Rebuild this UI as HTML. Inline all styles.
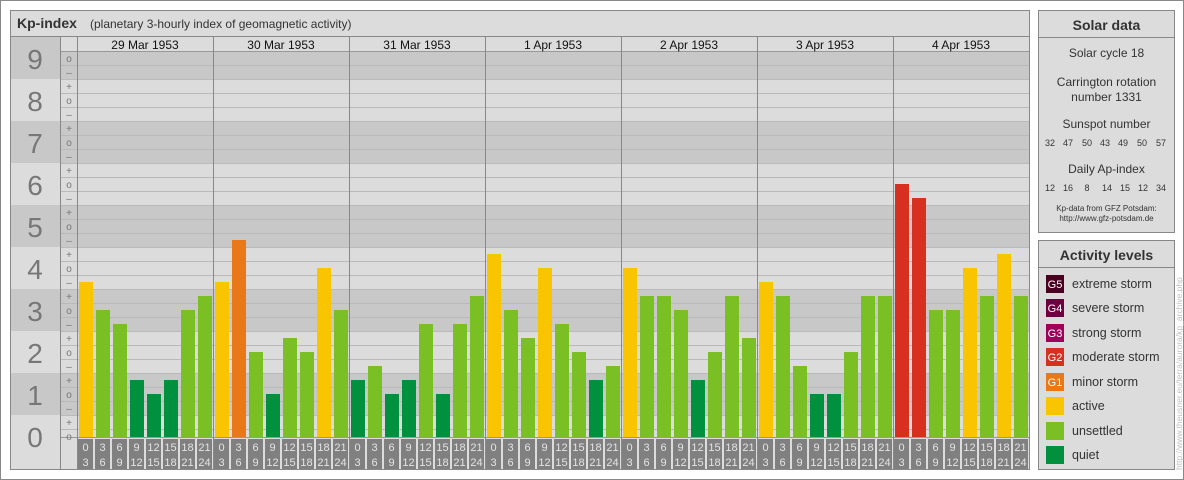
<!DOCTYPE html>
<html><head><meta charset="utf-8"><style>
html,body{margin:0;padding:0;background:#fff;}
svg{display:block;font-family:"Liberation Sans",Arial,sans-serif;}
</style></head><body>
<svg width="1184" height="480" viewBox="0 0 1184 480" xmlns="http://www.w3.org/2000/svg">
<rect x="0.5" y="0.5" width="1183" height="479" fill="#fff" stroke="#888"/>
<!-- main panel -->
<rect x="10.5" y="10.5" width="1019" height="459" fill="#dcdcdc" stroke="#888"/>
<text x="17" y="28" font-size="14" font-weight="bold" fill="#333">Kp-index</text>
<text x="90" y="28" font-size="12" fill="#333">(planetary 3-hourly index of geomagnetic activity)</text>
<line x1="10" y1="36.5" x2="1030" y2="36.5" stroke="#888"/>
<!-- number column bands -->
<rect x="11" y="37" width="49" height="42" fill="#c8c8c8"/>
<rect x="11" y="121" width="49" height="42" fill="#c8c8c8"/>
<rect x="11" y="205" width="49" height="42" fill="#c8c8c8"/>
<rect x="11" y="289" width="49" height="42" fill="#c8c8c8"/>
<rect x="11" y="373" width="49" height="42" fill="#c8c8c8"/>
<g font-size="28" fill="#777" text-anchor="middle">
<text x="35" y="69">9</text><text x="35" y="111">8</text><text x="35" y="153">7</text><text x="35" y="195">6</text><text x="35" y="237">5</text><text x="35" y="279">4</text><text x="35" y="321">3</text><text x="35" y="363">2</text><text x="35" y="405">1</text><text x="35" y="447">0</text>
</g>
<!-- chart bands (sign col + chart) -->
<rect x="60" y="51" width="969" height="28" fill="#c8c8c8"/>
<rect x="60" y="121" width="969" height="42" fill="#c8c8c8"/>
<rect x="60" y="205" width="969" height="42" fill="#c8c8c8"/>
<rect x="60" y="289" width="969" height="42" fill="#c8c8c8"/>
<rect x="60" y="373" width="969" height="42" fill="#c8c8c8"/>
<g stroke="#bababa" stroke-width="1">
<line x1="60" x2="1029" y1="65.5" y2="65.5"/><line x1="60" x2="1029" y1="79.5" y2="79.5"/><line x1="60" x2="1029" y1="93.5" y2="93.5"/><line x1="60" x2="1029" y1="107.5" y2="107.5"/><line x1="60" x2="1029" y1="121.5" y2="121.5"/><line x1="60" x2="1029" y1="135.5" y2="135.5"/><line x1="60" x2="1029" y1="149.5" y2="149.5"/><line x1="60" x2="1029" y1="163.5" y2="163.5"/><line x1="60" x2="1029" y1="177.5" y2="177.5"/><line x1="60" x2="1029" y1="191.5" y2="191.5"/><line x1="60" x2="1029" y1="205.5" y2="205.5"/><line x1="60" x2="1029" y1="219.5" y2="219.5"/><line x1="60" x2="1029" y1="233.5" y2="233.5"/><line x1="60" x2="1029" y1="247.5" y2="247.5"/><line x1="60" x2="1029" y1="261.5" y2="261.5"/><line x1="60" x2="1029" y1="275.5" y2="275.5"/><line x1="60" x2="1029" y1="289.5" y2="289.5"/><line x1="60" x2="1029" y1="303.5" y2="303.5"/><line x1="60" x2="1029" y1="317.5" y2="317.5"/><line x1="60" x2="1029" y1="331.5" y2="331.5"/><line x1="60" x2="1029" y1="345.5" y2="345.5"/><line x1="60" x2="1029" y1="359.5" y2="359.5"/><line x1="60" x2="1029" y1="373.5" y2="373.5"/><line x1="60" x2="1029" y1="387.5" y2="387.5"/><line x1="60" x2="1029" y1="401.5" y2="401.5"/><line x1="60" x2="1029" y1="415.5" y2="415.5"/><line x1="60" x2="1029" y1="429.5" y2="429.5"/>
</g>
<!-- header row -->
<rect x="60" y="37" width="969" height="14" fill="#dcdcdc"/>
<line x1="60" x2="1029" y1="51.5" y2="51.5" stroke="#999"/>
<line x1="60" x2="1029" y1="437.5" y2="437.5" stroke="#999"/>
<rect x="60" y="438" width="17" height="32" fill="#dcdcdc"/>
<rect x="77" y="438" width="952" height="31" fill="#dcdcdc"/>
<!-- signs -->
<g font-size="10" fill="#777" text-anchor="middle">
<text x="69" y="62">o</text><text x="69" y="76">–</text><text x="69" y="90">+</text><text x="69" y="104">o</text><text x="69" y="118">–</text><text x="69" y="132">+</text><text x="69" y="146">o</text><text x="69" y="160">–</text><text x="69" y="174">+</text><text x="69" y="188">o</text><text x="69" y="202">–</text><text x="69" y="216">+</text><text x="69" y="230">o</text><text x="69" y="244">–</text><text x="69" y="258">+</text><text x="69" y="272">o</text><text x="69" y="286">–</text><text x="69" y="300">+</text><text x="69" y="314">o</text><text x="69" y="328">–</text><text x="69" y="342">+</text><text x="69" y="356">o</text><text x="69" y="370">–</text><text x="69" y="384">+</text><text x="69" y="398">o</text><text x="69" y="412">–</text><text x="69" y="426">+</text><text x="69" y="440">o</text>
</g>
<!-- vertical lines -->
<g stroke="#888">
<line x1="60.5" x2="60.5" y1="37" y2="470"/>
<line x1="77.5" x2="77.5" y1="37" y2="470"/>
<line x1="213.5" x2="213.5" y1="37" y2="470"/><line x1="349.5" x2="349.5" y1="37" y2="470"/><line x1="485.5" x2="485.5" y1="37" y2="470"/><line x1="621.5" x2="621.5" y1="37" y2="470"/><line x1="757.5" x2="757.5" y1="37" y2="470"/><line x1="893.5" x2="893.5" y1="37" y2="470"/>
</g>
<g font-size="12" fill="#111" text-anchor="middle">
<text x="145" y="49">29 Mar 1953</text><text x="281" y="49">30 Mar 1953</text><text x="417" y="49">31 Mar 1953</text><text x="553" y="49">1 Apr 1953</text><text x="689" y="49">2 Apr 1953</text><text x="825" y="49">3 Apr 1953</text><text x="961" y="49">4 Apr 1953</text>
</g>
<!-- bars -->
<g transform="translate(77,0)">
<rect x="2" y="282" width="14" height="155" fill="#f8c500"/><rect x="19" y="310" width="14" height="127" fill="#7ac025"/><rect x="36" y="324" width="14" height="113" fill="#7ac025"/><rect x="53" y="380" width="14" height="57" fill="#00903e"/><rect x="70" y="394" width="14" height="43" fill="#00903e"/><rect x="87" y="380" width="14" height="57" fill="#00903e"/><rect x="104" y="310" width="14" height="127" fill="#7ac025"/><rect x="121" y="296" width="14" height="141" fill="#7ac025"/>
</g>
<g transform="translate(213,0)">
<rect x="2" y="282" width="14" height="155" fill="#f8c500"/><rect x="19" y="240" width="14" height="197" fill="#e87818"/><rect x="36" y="352" width="14" height="85" fill="#7ac025"/><rect x="53" y="394" width="14" height="43" fill="#00903e"/><rect x="70" y="338" width="14" height="99" fill="#7ac025"/><rect x="87" y="352" width="14" height="85" fill="#7ac025"/><rect x="104" y="268" width="14" height="169" fill="#f8c500"/><rect x="121" y="310" width="14" height="127" fill="#7ac025"/>
</g>
<g transform="translate(349,0)">
<rect x="2" y="380" width="14" height="57" fill="#00903e"/><rect x="19" y="366" width="14" height="71" fill="#7ac025"/><rect x="36" y="394" width="14" height="43" fill="#00903e"/><rect x="53" y="380" width="14" height="57" fill="#00903e"/><rect x="70" y="324" width="14" height="113" fill="#7ac025"/><rect x="87" y="394" width="14" height="43" fill="#00903e"/><rect x="104" y="324" width="14" height="113" fill="#7ac025"/><rect x="121" y="296" width="14" height="141" fill="#7ac025"/>
</g>
<g transform="translate(485,0)">
<rect x="2" y="254" width="14" height="183" fill="#f8c500"/><rect x="19" y="310" width="14" height="127" fill="#7ac025"/><rect x="36" y="338" width="14" height="99" fill="#7ac025"/><rect x="53" y="268" width="14" height="169" fill="#f8c500"/><rect x="70" y="324" width="14" height="113" fill="#7ac025"/><rect x="87" y="352" width="14" height="85" fill="#7ac025"/><rect x="104" y="380" width="14" height="57" fill="#00903e"/><rect x="121" y="366" width="14" height="71" fill="#7ac025"/>
</g>
<g transform="translate(621,0)">
<rect x="2" y="268" width="14" height="169" fill="#f8c500"/><rect x="19" y="296" width="14" height="141" fill="#7ac025"/><rect x="36" y="296" width="14" height="141" fill="#7ac025"/><rect x="53" y="310" width="14" height="127" fill="#7ac025"/><rect x="70" y="380" width="14" height="57" fill="#00903e"/><rect x="87" y="352" width="14" height="85" fill="#7ac025"/><rect x="104" y="296" width="14" height="141" fill="#7ac025"/><rect x="121" y="338" width="14" height="99" fill="#7ac025"/>
</g>
<g transform="translate(757,0)">
<rect x="2" y="282" width="14" height="155" fill="#f8c500"/><rect x="19" y="296" width="14" height="141" fill="#7ac025"/><rect x="36" y="366" width="14" height="71" fill="#7ac025"/><rect x="53" y="394" width="14" height="43" fill="#00903e"/><rect x="70" y="394" width="14" height="43" fill="#00903e"/><rect x="87" y="352" width="14" height="85" fill="#7ac025"/><rect x="104" y="296" width="14" height="141" fill="#7ac025"/><rect x="121" y="296" width="14" height="141" fill="#7ac025"/>
</g>
<g transform="translate(893,0)">
<rect x="2" y="184" width="14" height="253" fill="#d83020"/><rect x="19" y="198" width="14" height="239" fill="#d83020"/><rect x="36" y="310" width="14" height="127" fill="#7ac025"/><rect x="53" y="310" width="14" height="127" fill="#7ac025"/><rect x="70" y="268" width="14" height="169" fill="#f8c500"/><rect x="87" y="296" width="14" height="141" fill="#7ac025"/><rect x="104" y="254" width="14" height="183" fill="#f8c500"/><rect x="121" y="296" width="14" height="141" fill="#7ac025"/>
</g>
<!-- time labels -->
<g fill="#808080">
<rect x="78" y="439" width="15" height="31"/><rect x="95" y="439" width="15" height="31"/><rect x="112" y="439" width="15" height="31"/><rect x="129" y="439" width="15" height="31"/><rect x="146" y="439" width="15" height="31"/><rect x="163" y="439" width="15" height="31"/><rect x="180" y="439" width="15" height="31"/><rect x="197" y="439" width="15" height="31"/>
<rect x="214" y="439" width="15" height="31"/><rect x="231" y="439" width="15" height="31"/><rect x="248" y="439" width="15" height="31"/><rect x="265" y="439" width="15" height="31"/><rect x="282" y="439" width="15" height="31"/><rect x="299" y="439" width="15" height="31"/><rect x="316" y="439" width="15" height="31"/><rect x="333" y="439" width="15" height="31"/>
<rect x="350" y="439" width="15" height="31"/><rect x="367" y="439" width="15" height="31"/><rect x="384" y="439" width="15" height="31"/><rect x="401" y="439" width="15" height="31"/><rect x="418" y="439" width="15" height="31"/><rect x="435" y="439" width="15" height="31"/><rect x="452" y="439" width="15" height="31"/><rect x="469" y="439" width="15" height="31"/>
<rect x="486" y="439" width="15" height="31"/><rect x="503" y="439" width="15" height="31"/><rect x="520" y="439" width="15" height="31"/><rect x="537" y="439" width="15" height="31"/><rect x="554" y="439" width="15" height="31"/><rect x="571" y="439" width="15" height="31"/><rect x="588" y="439" width="15" height="31"/><rect x="605" y="439" width="15" height="31"/>
<rect x="622" y="439" width="15" height="31"/><rect x="639" y="439" width="15" height="31"/><rect x="656" y="439" width="15" height="31"/><rect x="673" y="439" width="15" height="31"/><rect x="690" y="439" width="15" height="31"/><rect x="707" y="439" width="15" height="31"/><rect x="724" y="439" width="15" height="31"/><rect x="741" y="439" width="15" height="31"/>
<rect x="758" y="439" width="15" height="31"/><rect x="775" y="439" width="15" height="31"/><rect x="792" y="439" width="15" height="31"/><rect x="809" y="439" width="15" height="31"/><rect x="826" y="439" width="15" height="31"/><rect x="843" y="439" width="15" height="31"/><rect x="860" y="439" width="15" height="31"/><rect x="877" y="439" width="15" height="31"/>
<rect x="894" y="439" width="15" height="31"/><rect x="911" y="439" width="15" height="31"/><rect x="928" y="439" width="15" height="31"/><rect x="945" y="439" width="15" height="31"/><rect x="962" y="439" width="15" height="31"/><rect x="979" y="439" width="15" height="31"/><rect x="996" y="439" width="15" height="31"/><rect x="1013" y="439" width="15" height="31"/>
</g>
<g font-size="11" fill="#e4e4e4" text-anchor="middle">
<g transform="translate(77,0)"><text x="8.5" y="451">0</text><text x="25.5" y="451">3</text><text x="42.5" y="451">6</text><text x="59.5" y="451">9</text><text x="76.5" y="451">12</text><text x="93.5" y="451">15</text><text x="110.5" y="451">18</text><text x="127.5" y="451">21</text><text x="8.5" y="466">3</text><text x="25.5" y="466">6</text><text x="42.5" y="466">9</text><text x="59.5" y="466">12</text><text x="76.5" y="466">15</text><text x="93.5" y="466">18</text><text x="110.5" y="466">21</text><text x="127.5" y="466">24</text></g>
<g transform="translate(213,0)"><text x="8.5" y="451">0</text><text x="25.5" y="451">3</text><text x="42.5" y="451">6</text><text x="59.5" y="451">9</text><text x="76.5" y="451">12</text><text x="93.5" y="451">15</text><text x="110.5" y="451">18</text><text x="127.5" y="451">21</text><text x="8.5" y="466">3</text><text x="25.5" y="466">6</text><text x="42.5" y="466">9</text><text x="59.5" y="466">12</text><text x="76.5" y="466">15</text><text x="93.5" y="466">18</text><text x="110.5" y="466">21</text><text x="127.5" y="466">24</text></g>
<g transform="translate(349,0)"><text x="8.5" y="451">0</text><text x="25.5" y="451">3</text><text x="42.5" y="451">6</text><text x="59.5" y="451">9</text><text x="76.5" y="451">12</text><text x="93.5" y="451">15</text><text x="110.5" y="451">18</text><text x="127.5" y="451">21</text><text x="8.5" y="466">3</text><text x="25.5" y="466">6</text><text x="42.5" y="466">9</text><text x="59.5" y="466">12</text><text x="76.5" y="466">15</text><text x="93.5" y="466">18</text><text x="110.5" y="466">21</text><text x="127.5" y="466">24</text></g>
<g transform="translate(485,0)"><text x="8.5" y="451">0</text><text x="25.5" y="451">3</text><text x="42.5" y="451">6</text><text x="59.5" y="451">9</text><text x="76.5" y="451">12</text><text x="93.5" y="451">15</text><text x="110.5" y="451">18</text><text x="127.5" y="451">21</text><text x="8.5" y="466">3</text><text x="25.5" y="466">6</text><text x="42.5" y="466">9</text><text x="59.5" y="466">12</text><text x="76.5" y="466">15</text><text x="93.5" y="466">18</text><text x="110.5" y="466">21</text><text x="127.5" y="466">24</text></g>
<g transform="translate(621,0)"><text x="8.5" y="451">0</text><text x="25.5" y="451">3</text><text x="42.5" y="451">6</text><text x="59.5" y="451">9</text><text x="76.5" y="451">12</text><text x="93.5" y="451">15</text><text x="110.5" y="451">18</text><text x="127.5" y="451">21</text><text x="8.5" y="466">3</text><text x="25.5" y="466">6</text><text x="42.5" y="466">9</text><text x="59.5" y="466">12</text><text x="76.5" y="466">15</text><text x="93.5" y="466">18</text><text x="110.5" y="466">21</text><text x="127.5" y="466">24</text></g>
<g transform="translate(757,0)"><text x="8.5" y="451">0</text><text x="25.5" y="451">3</text><text x="42.5" y="451">6</text><text x="59.5" y="451">9</text><text x="76.5" y="451">12</text><text x="93.5" y="451">15</text><text x="110.5" y="451">18</text><text x="127.5" y="451">21</text><text x="8.5" y="466">3</text><text x="25.5" y="466">6</text><text x="42.5" y="466">9</text><text x="59.5" y="466">12</text><text x="76.5" y="466">15</text><text x="93.5" y="466">18</text><text x="110.5" y="466">21</text><text x="127.5" y="466">24</text></g>
<g transform="translate(893,0)"><text x="8.5" y="451">0</text><text x="25.5" y="451">3</text><text x="42.5" y="451">6</text><text x="59.5" y="451">9</text><text x="76.5" y="451">12</text><text x="93.5" y="451">15</text><text x="110.5" y="451">18</text><text x="127.5" y="451">21</text><text x="8.5" y="466">3</text><text x="25.5" y="466">6</text><text x="42.5" y="466">9</text><text x="59.5" y="466">12</text><text x="76.5" y="466">15</text><text x="93.5" y="466">18</text><text x="110.5" y="466">21</text><text x="127.5" y="466">24</text></g>
</g>
<rect x="10.5" y="10.5" width="1019" height="459" fill="none" stroke="#888"/>

<!-- Solar data -->
<rect x="1038.5" y="10.5" width="136" height="222" fill="#dcdcdc" stroke="#888"/>
<line x1="1038" x2="1175" y1="37.5" y2="37.5" stroke="#888"/>
<g text-anchor="middle" fill="#333">
<text x="1106.5" y="30" font-size="14" font-weight="bold">Solar data</text>
<text x="1106.5" y="57" font-size="12">Solar cycle 18</text>
<text x="1106.5" y="86" font-size="12">Carrington rotation</text>
<text x="1106.5" y="101" font-size="12">number 1331</text>
<text x="1106.5" y="128" font-size="12">Sunspot number</text>
<text x="1106.5" y="173" font-size="12">Daily Ap-index</text>
<g font-size="9">
<text x="1050" y="146">32</text><text x="1068" y="146">47</text><text x="1087" y="146">50</text><text x="1105" y="146">43</text><text x="1123" y="146">49</text><text x="1142" y="146">50</text><text x="1161" y="146">57</text>
<text x="1050" y="191">12</text><text x="1068" y="191">16</text><text x="1087" y="191">8</text><text x="1107" y="191">14</text><text x="1125" y="191">15</text><text x="1143" y="191">12</text><text x="1161" y="191">34</text>
</g>
<text x="1106.5" y="211" font-size="8">Kp-data from GFZ Potsdam:</text>
<text x="1106.5" y="221" font-size="8">http://www.gfz-potsdam.de</text>
</g>

<!-- Activity levels -->
<rect x="1038.5" y="240.5" width="136" height="229" fill="#dcdcdc" stroke="#888"/>
<line x1="1038" x2="1175" y1="267.5" y2="267.5" stroke="#888"/>
<text x="1106.5" y="260" font-size="14" font-weight="bold" fill="#333" text-anchor="middle">Activity levels</text>
<rect x="1046" y="275" width="18" height="18" fill="#4a0020"/>
<rect x="1046" y="299" width="18" height="18" fill="#6e0040"/>
<rect x="1046" y="324" width="18" height="18" fill="#a0005a"/>
<rect x="1046" y="348" width="18" height="18" fill="#d83020"/>
<rect x="1046" y="373" width="18" height="18" fill="#e87818"/>
<rect x="1046" y="397" width="18" height="18" fill="#f8c500"/>
<rect x="1046" y="422" width="18" height="18" fill="#7ac025"/>
<rect x="1046" y="446" width="18" height="18" fill="#00903e"/>
<g font-size="11" fill="#fff" text-anchor="middle">
<text x="1055" y="288">G5</text><text x="1055" y="312">G4</text><text x="1055" y="337">G3</text><text x="1055" y="361">G2</text><text x="1055" y="386">G1</text>
</g>
<g font-size="12.5" fill="#333">
<text x="1072" y="288">extreme storm</text><text x="1072" y="312">severe storm</text><text x="1072" y="337">strong storm</text><text x="1072" y="361">moderate storm</text><text x="1072" y="386">minor storm</text><text x="1072" y="410">active</text><text x="1072" y="435">unsettled</text><text x="1072" y="459">quiet</text>
</g>
<text transform="translate(1182,470) rotate(-90)" font-size="8.5" fill="#c0c0c0">http://www.theusner.eu/terra/aurora/kp_archive.php</text>
</svg>
</body></html>
